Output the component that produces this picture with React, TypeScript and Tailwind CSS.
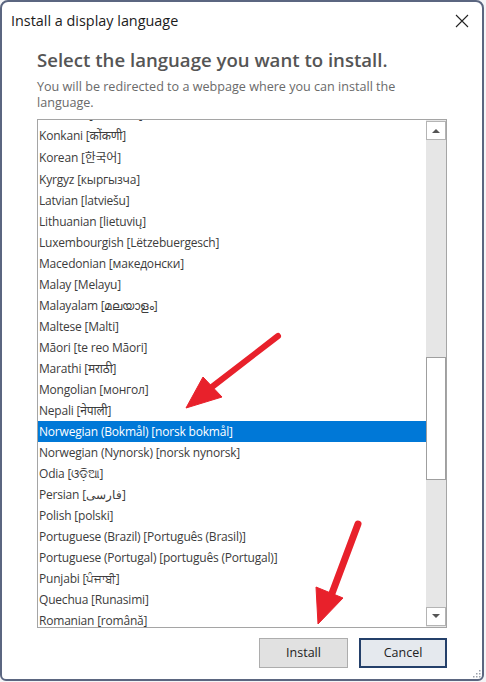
import React from "react";

const languages: { label: string; tall?: boolean }[] = [
  { label: "Kiswahili [Kiswahili]" },
  { label: "Konkani [कोंकणी]" },
  { label: "Korean [한국어]", tall: true },
  { label: "Kyrgyz [кыргызча]" },
  { label: "Latvian [latviešu]" },
  { label: "Lithuanian [lietuvių]" },
  { label: "Luxembourgish [Lëtzebuergesch]" },
  { label: "Macedonian [македонски]" },
  { label: "Malay [Melayu]" },
  { label: "Malayalam [മലയാളം]" },
  { label: "Maltese [Malti]" },
  { label: "Māori [te reo Māori]" },
  { label: "Marathi [मराठी]" },
  { label: "Mongolian [монгол]" },
  { label: "Nepali [नेपाली]" },
  { label: "Norwegian (Bokmål) [norsk bokmål]" },
  { label: "Norwegian (Nynorsk) [norsk nynorsk]" },
  { label: "Odia [ଓଡ଼ିଆ]" },
  { label: "Persian [فارسی]" },
  { label: "Polish [polski]" },
  { label: "Portuguese (Brazil) [Português (Brasil)]" },
  { label: "Portuguese (Portugal) [português (Portugal)]" },
  { label: "Punjabi [ਪੰਜਾਬੀ]" },
  { label: "Quechua [Runasimi]" },
  { label: "Romanian [română]" },
];

const selected = "Norwegian (Bokmål) [norsk bokmål]";

export default function App() {
  return (
    <div className="relative w-[486px] h-[682px] bg-[#f4f5f7] font-['Open_Sans','Noto_Sans','Noto_Sans_CJK_KR',sans-serif]">
      {/* Window */}
      <div className="w-[484px] h-[681px] bg-white border-2 border-[#5b6680] rounded-t-[8px] rounded-b-[6px] flex flex-col">
        {/* Title bar */}
        <div className="h-[38px] flex items-center justify-between pl-[9px] pr-[13px]">
          <span className="text-[14.4px] text-[#1b1b1b]">Install a display language</span>
          <svg width="14" height="14" viewBox="0 0 14 14">
            <path d="M1 1 L13 13 M13 1 L1 13" stroke="#222" strokeWidth="1.1" />
          </svg>
        </div>

        {/* Content */}
        <div className="px-[35px] flex flex-col">
          <h1 className="mt-[8px] text-[18.6px] leading-[26px] font-semibold text-[#555]">
            Select the language you want to install.
          </h1>
          <p className="mt-[6px] text-[12.6px] leading-[16px] text-[#6a6a6a] pr-[30px]">
            You will be redirected to a webpage where you can install the language.
          </p>

          {/* List box */}
          <div className="mt-[8px] h-[509px] border border-[#a5a5a5] bg-white flex">
            <div className="flex-1 overflow-hidden">
              <div className="-mt-[16px]">
                {languages.map((l) => (
                  <div
                    key={l.label}
                    className={`${l.tall ? "h-[23px]" : "h-[21px]"} flex items-center pl-[1px] text-[12px] whitespace-nowrap tracking-[-0.2px] ${
                      l.label === selected ? "bg-[#0078d7] text-white" : "text-[#3c3c3c]"
                    }`}
                  >
                    {l.label}
                  </div>
                ))}
              </div>
            </div>

            {/* Scrollbar */}
            <div className="w-[20px] bg-[#e6e6e6] flex flex-col py-px">
              <div className="h-[19px] bg-white border border-[#b4b4b4] flex items-center justify-center">
                <svg width="8" height="5" viewBox="0 0 8 5">
                  <path d="M0 5 L4 1 L8 5 Z" fill="#555" />
                </svg>
              </div>
              <div className="h-[217px]" />
              <div className="h-[123px] bg-white border border-[#9f9f9f]" />
              <div className="flex-1" />
              <div className="h-[19px] bg-white border border-[#b4b4b4] flex items-center justify-center">
                <svg width="8" height="5" viewBox="0 0 8 5">
                  <path d="M0 0 L4 4 L8 0 Z" fill="#555" />
                </svg>
              </div>
            </div>
          </div>

          {/* Buttons */}
          <div className="mt-[10px] flex justify-end gap-[11px]">
            <button className="w-[89px] h-[30px] bg-[#e1e1e1] border border-[#adadad] text-[12.5px] text-[#222]">
              Install
            </button>
            <button className="w-[88px] h-[30px] bg-[#e5e9ee] border-2 border-[#24406a] text-[12.5px] text-[#222]">
              Cancel
            </button>
          </div>
        </div>
        <div className="flex-1 flex items-end justify-end pr-[1px] pb-[1px]">
          <svg width="10" height="10" viewBox="0 0 10 10">
            <g fill="#9aa0aa">
              <rect x="8" y="2" width="1.5" height="1.5" />
              <rect x="5" y="5" width="1.5" height="1.5" />
              <rect x="8" y="5" width="1.5" height="1.5" />
              <rect x="2" y="8" width="1.5" height="1.5" />
              <rect x="5" y="8" width="1.5" height="1.5" />
              <rect x="8" y="8" width="1.5" height="1.5" />
            </g>
          </svg>
        </div>
      </div>

      {/* Red annotation arrows */}
      <svg className="absolute inset-0 pointer-events-none" width="486" height="682">
        <g fill="#e8212b" stroke="#e8212b">
          <line x1="278" y1="336" x2="208" y2="390" strokeWidth="6" strokeLinecap="round" />
          <polygon points="186,408 203,377 222,397" strokeWidth="1" strokeLinejoin="round" />
          <line x1="358" y1="524" x2="331" y2="596" strokeWidth="7" strokeLinecap="round" />
          <polygon points="318,624 316,587 343,598" strokeWidth="1" strokeLinejoin="round" />
        </g>
      </svg>
    </div>
  );
}
